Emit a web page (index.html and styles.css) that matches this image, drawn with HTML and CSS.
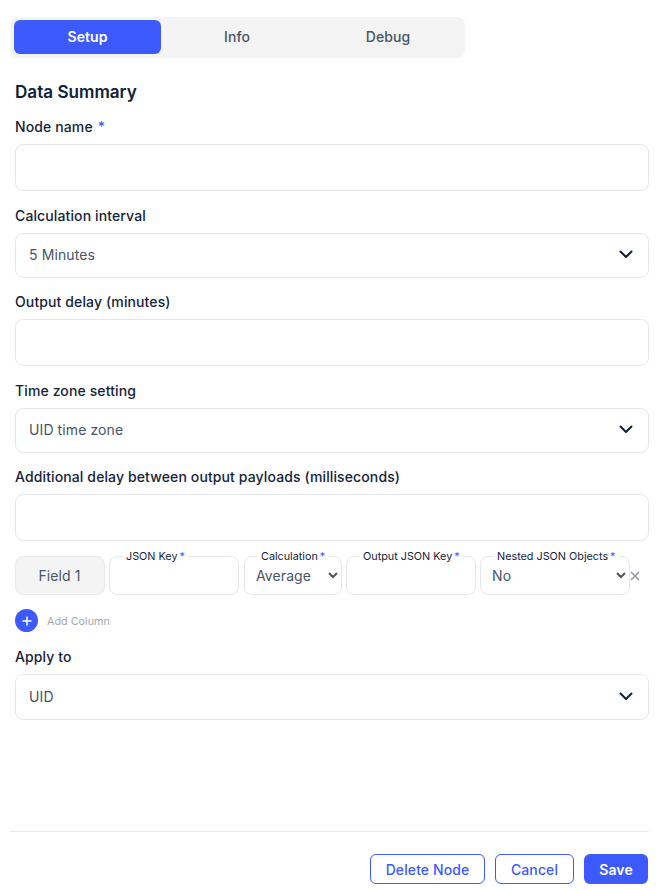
FILE: index.html
```html
<!DOCTYPE html>
<html lang="en">
<head>
<meta charset="utf-8">
<title>Data Summary</title>
<link rel="stylesheet" href="styles.css">
</head>
<body>
<main class="panel">
  <div class="tabs">
    <button class="tab tab-active">Setup</button>
    <button class="tab tab-info">Info</button>
    <button class="tab tab-debug">Debug</button>
  </div>
  <form class="form">
    <h1 class="title">Data Summary</h1>
    <div class="field field-input">
      <label class="label">Node name <span class="req req-main">*</span></label>
      <input class="control" type="text">
    </div>
    <div class="field field-select">
      <label class="label">Calculation interval</label>
      <div class="select-box">
        <span>5 Minutes</span>
        <svg class="chevron" viewBox="0 0 14 9"><path d="M1.500 1.500 7 7l5.500-5.500"/></svg>
      </div>
    </div>
    <div class="field field-input">
      <label class="label">Output delay (minutes)</label>
      <input class="control" type="text">
    </div>
    <div class="field field-select">
      <label class="label">Time zone setting</label>
      <div class="select-box">
        <span>UID time zone</span>
        <svg class="chevron" viewBox="0 0 14 9"><path d="M1.500 1.500 7 7l5.500-5.500"/></svg>
      </div>
    </div>
    <div class="field field-input">
      <label class="label">Additional delay between output payloads (milliseconds)</label>
      <input class="control" type="text">
    </div>
    <div class="row">
      <div class="field-name">Field 1</div>
      <div class="mini mini-key mini-first">
        <span class="float">JSON Key<span class="req">*</span></span>
        <input class="mini-control" type="text">
      </div>
      <div class="mini mini-calc">
        <span class="float">Calculation<span class="req">*</span></span>
        <select class="mini-control"><option>Average</option></select>
      </div>
      <div class="mini mini-key">
        <span class="float">Output JSON Key<span class="req">*</span></span>
        <input class="mini-control" type="text">
      </div>
      <div class="mini mini-nested">
        <span class="float">Nested JSON Objects<span class="req">*</span></span>
        <select class="mini-control"><option>No</option></select>
      </div>
      <svg class="remove" viewBox="0 0 10 10"><path d="M1 1l8 8M9 1 1 9"/></svg>
    </div>
    <div class="add">
      <span class="add-btn"><svg viewBox="0 0 10 10"><path d="M5 .5v9M.5 5h9"/></svg></span>
      <span class="add-text">Add Column</span>
    </div>
    <div class="field">
      <label class="label">Apply to</label>
      <div class="select-box select-tall">
        <span>UID</span>
        <svg class="chevron" viewBox="0 0 14 9"><path d="M1.500 1.500 7 7l5.500-5.500"/></svg>
      </div>
    </div>
  </form>
  <footer class="footer">
    <button class="btn btn-outline btn-delete">Delete Node</button>
    <button class="btn btn-outline btn-cancel">Cancel</button>
    <button class="btn btn-solid">Save</button>
  </footer>
</main>
</body>
</html>
```
FILE: styles.css
```css
* { box-sizing: border-box; }
html, body { margin: 0; padding: 0; background: #fff; }
body { font-family: Inter, "Liberation Sans", sans-serif; color: #101f33; overflow: hidden; }
.panel { width: 662px; height: 890px; padding: 17px 13px 0 10px; display: flex; flex-direction: column; }
.tabs { width: 455px; height: 41px; padding: 3px 2px 4px 4px; background: #f4f4f5; border-radius: 8px; display: flex; flex: none; }
.tab { flex: none; width: 150px; border: 0; background: none; border-radius: 6px; font: 450 14px/20px Inter, sans-serif; letter-spacing: .1px; color: #475467; padding: 0; }
.tab-active { width: 147px; background: #3d5afe; color: #fff; font-weight: 600; }
.tab-info { width: 152px; }
.form { padding-left: 5px; flex: 1; }
.title { margin: 22px 0 13px; font-size: 17.100px; line-height: 24px; font-weight: 600; color: #0f2038; }
.field-input { margin-bottom: 15px; }
.field-select { margin-bottom: 14px; }
.label { display: block; font-size: 14px; line-height: 20px; font-weight: 450; letter-spacing: .12px; color: #14233a; margin-bottom: 7px; }
.req { color: #3d5afe; }
.req-main { margin-left: 1px; }
.control { display: block; width: 100%; height: 47px; border: 1px solid #e6e7ea; border-radius: 8px; background: #fff; outline: 0; }
.select-box { height: 45px; padding: 0 15px 2px 13px; border: 1px solid #e6e7ea; border-radius: 8px; display: flex; align-items: center; justify-content: space-between; font-size: 14px; letter-spacing: .1px; color: #475467; }
.select-tall { height: 46px; }
.chevron { width: 14px; height: 9px; fill: none; stroke: #101f33; stroke-width: 2; stroke-linecap: round; stroke-linejoin: round; }
.row { display: flex; align-items: flex-start; height: 40px; margin-bottom: 13px; }
.field-name { width: 90px; height: 39px; margin-right: 4px; padding-right: 1px; background: #f4f4f5; border: 1px solid #e9eaec; border-radius: 8px; display: flex; align-items: center; justify-content: center; font-size: 14px; letter-spacing: .1px; color: #475467; }
.mini { position: relative; height: 39px; margin-right: 4px; }
.mini-key { width: 130px; }
.mini-first { margin-right: 5px; }
.mini-calc { width: 98px; }
.mini-nested { width: 150px; margin-right: 0; }
.mini-control { display: block; width: 100%; height: 100%; border: 1px solid #e6e7ea; border-radius: 8px; background: #fff; outline: 0; font: 400 14px Inter, sans-serif; letter-spacing: .1px; color: #475467; padding: 0 0 0 7px; }
.float { position: absolute; top: -6px; left: 14px; padding: 0 3px; background: #fff; font-size: 10.800px; line-height: 14px; color: #14233a; white-space: nowrap; z-index: 1; }
.float .req { margin-left: 2px; }
.remove { width: 10px; height: 10px; margin: 15px 0 0 0; fill: none; stroke: #8a8f98; stroke-width: 1.300; flex: none; }
.add { display: flex; align-items: center; gap: 9px; height: 23px; margin-bottom: 15px; }
.add-btn { width: 23px; height: 23px; border-radius: 50%; background: #3d5afe; display: flex; align-items: center; justify-content: center; }
.add-btn svg { width: 10px; height: 10px; fill: none; stroke: #fff; stroke-width: 1.500; }
.add-text { padding-top: 2px; font-size: 10.800px; color: #a3a7ad; }
.footer { border-top: 1px solid #e9eaec; padding: 22px 1px 0 0; display: flex; justify-content: flex-end; gap: 10px; flex: none; height: 59px; }
.btn { height: 30px; padding: 1px 0 0; border-radius: 6px; font: 450 14px/20px Inter, sans-serif; letter-spacing: .1px; }
.btn-outline { background: #fff; border: 1px solid #3d5afe; color: #3d5afe; }
.btn-delete { width: 115px; }
.btn-cancel { width: 79px; }
.btn-solid { width: 64px; background: #3d5afe; border: 0; color: #fff; font-weight: 600; }
```
